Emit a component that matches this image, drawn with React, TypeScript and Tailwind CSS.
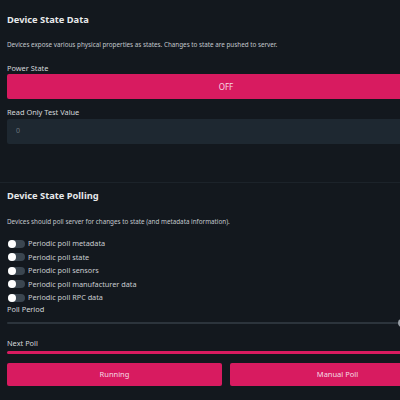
import React from 'react';

const toggles = [
  'Periodic poll metadata',
  'Periodic poll state',
  'Periodic poll sensors',
  'Periodic poll manufacturer data',
  'Periodic poll RPC data',
];

const Toggle: React.FC<{ label: string }> = ({ label }) => (
  <div className="flex h-[13.5px] items-center">
    <div className="relative ml-[1px] h-[8px] w-[17px] rounded-full bg-[#3b4650]">
      <div className="absolute left-0 top-1/2 h-[8px] w-[8px] -translate-y-1/2 rounded-full bg-white" />
    </div>
    <span className="ml-[3px] text-[7.3px] leading-[11px] text-[#c9cdd1]">{label}</span>
  </div>
);

export default function App() {
  return (
    <div
      className="h-[400px] w-[400px] overflow-hidden bg-[#13181e] text-[#e3e5e7]"
      style={{ fontFamily: '"Noto Sans", "Open Sans", sans-serif' }}
    >
      <div className="flex w-[452px] flex-col px-[7px]">
        {/* Device State Data */}
        <h2 className="mt-[13px] text-[9.3px] font-bold leading-[14px] text-[#e6e8ea]">Device State Data</h2>
        <p className="mt-[13px] text-[6.3px] leading-[10px] text-[#c2c7cc]">
          Devices expose various physical properties as states. Changes to state are pushed to server.
        </p>

        <label className="mt-[13px] text-[7.4px] leading-[11px] text-[#d4d7da]">Power State</label>
        <button className="h-[25px] w-full rounded-[2px] bg-[#d81b60] text-[8px] text-[#f6dbe5]">OFF</button>

        <label className="mt-[8px] text-[7.4px] leading-[11px] text-[#d4d7da]">Read Only Test Value</label>
        <div className="mt-[1px] flex h-[25px] items-center rounded-[2px] bg-[#1e2831] pl-[9px] text-[7px] text-[#6d767e]">
          0
        </div>
      </div>

      <div className="mt-[38px] h-px w-full bg-[#1c232a]" />

      <div className="flex w-[452px] flex-col px-[7px]">
        {/* Device State Polling */}
        <h2 className="mt-[6px] text-[9.3px] font-bold leading-[14px] text-[#e6e8ea]">Device State Polling</h2>
        <p className="mt-[14px] text-[6.3px] leading-[10px] text-[#c2c7cc]">
          Devices should poll server for changes to state (and metadata information).
        </p>

        <div className="mt-[10px] flex flex-col">
          {toggles.map((t) => (
            <Toggle key={t} label={t} />
          ))}
        </div>

        <label className="mt-[-1px] text-[7.4px] leading-[11px] text-[#d4d7da]">Poll Period</label>
        <div className="relative mt-[5px] h-[6px] w-full">
          <div className="absolute left-0 right-0 top-1/2 h-[2px] -translate-y-1/2 rounded-full bg-[#2c343c]" />
          <div className="absolute left-[391px] top-1/2 h-[8px] w-[8px] -translate-y-1/2 rounded-full bg-[#9aa1a8]" />
        </div>

        <label className="mt-[12px] text-[7.4px] leading-[11px] text-[#d4d7da]">Next Poll</label>
        <div className="mt-[2px] h-[3.5px] w-full rounded-full bg-[#d81b60]" />

        <div className="mt-[9px] flex gap-[8px]">
          <button className="h-[23px] flex-1 rounded-[2px] bg-[#d81b60] text-[7.5px] text-[#f6dbe5]">Running</button>
          <button className="h-[23px] flex-1 rounded-[2px] bg-[#d81b60] text-[7.5px] text-[#f6dbe5]">Manual Poll</button>
        </div>
      </div>
    </div>
  );
}
